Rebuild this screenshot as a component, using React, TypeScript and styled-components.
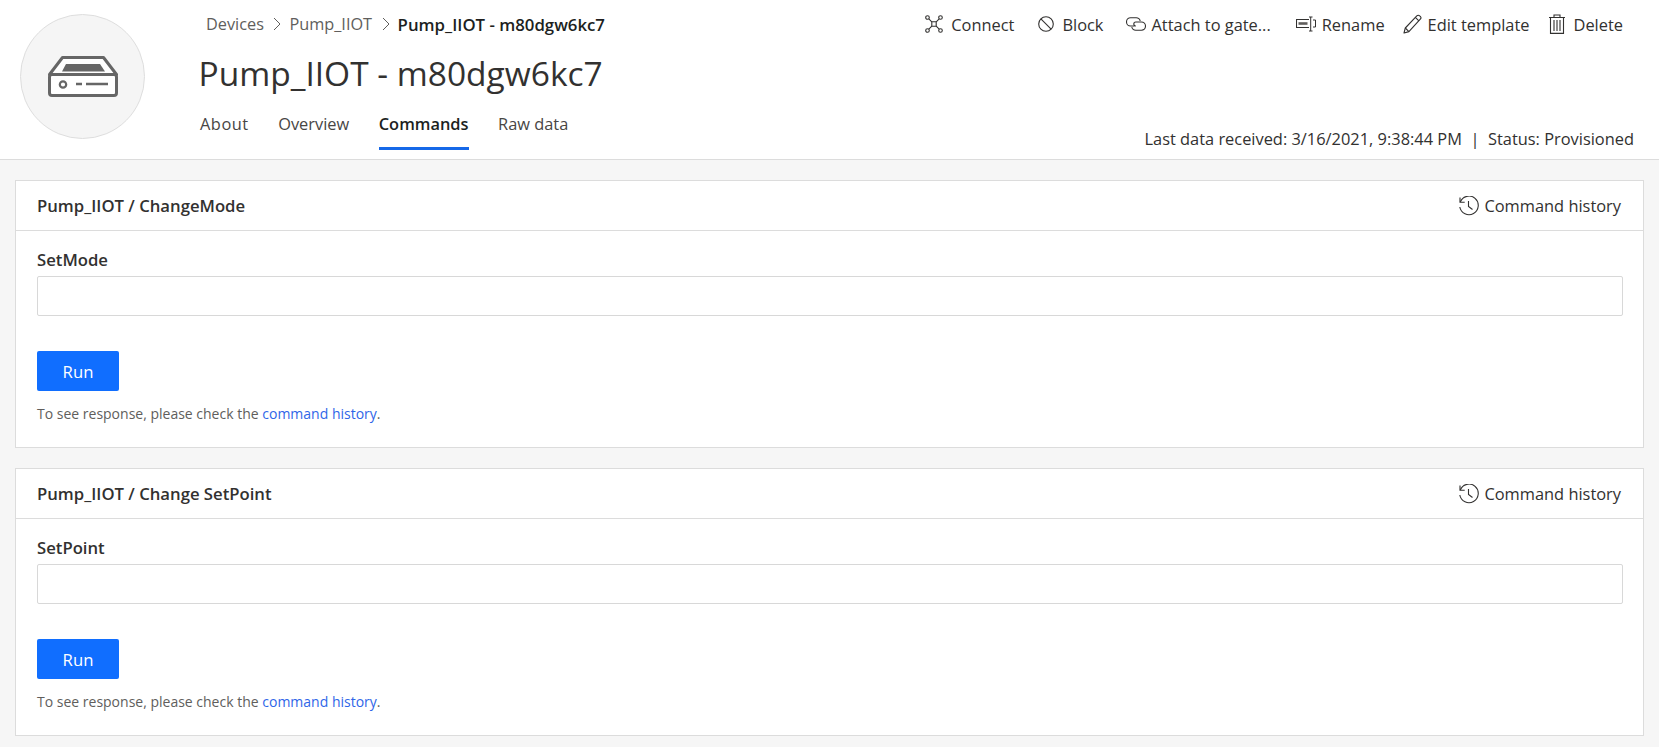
import React from "react";
import styled, { createGlobalStyle } from "styled-components";

const Global = createGlobalStyle`
  html, body { margin: 0; padding: 0; background: #f6f6f6; }
  body { font-family: "Open Sans", "Noto Sans", sans-serif; color: #323130; overflow: hidden; }
  * { box-sizing: border-box; }
`;

const Page = styled.div`
  min-height: 747px;
  background: #f6f6f6;
`;

const Header = styled.header`
  display: flex;
  height: 160px;
  background: #fff;
  border-bottom: 1px solid #dcdcdc;
`;

const Avatar = styled.div`
  flex: none;
  width: 125px;
  height: 125px;
  margin: 14px 54px 0 20px;
  border-radius: 50%;
  background: #f5f5f5;
  border: 1px solid #dedede;
  display: flex;
  align-items: center;
  justify-content: center;
`;

const Middle = styled.div`
  flex: none;
  display: flex;
  flex-direction: column;
  padding-top: 13px;
`;

const Crumbs = styled.nav`
  display: flex;
  align-items: center;
  height: 22px;
  padding-left: 7px;
  font-size: 16.3px;
`;

const CrumbLink = styled.span`
  color: #605e5c;
`;

const CrumbCurrent = styled.span`
  color: #201f1e;
  font-weight: 600;
  font-size: 16.8px;
`;

const CrumbSep = styled.svg`
  margin: 0 8px 0 9.5px;
`;

const Title = styled.h1`
  margin: 16px 0 0 -0.5px;
  font-size: 33.5px;
  line-height: 44px;
  font-weight: 400;
  color: #323130;
  white-space: nowrap;
`;

const Tabs = styled.div`
  display: flex;
  gap: 29.5px;
  margin-top: 13px;
  padding-left: 1px;
`;

const Tab = styled.div<{ $active?: boolean }>`
  height: 42px;
  line-height: 32px;
  font-size: 16.4px;
  font-weight: ${(p) => (p.$active ? 600 : 400)};
  color: ${(p) => (p.$active ? "#201f1e" : "#484644")};
  border-bottom: 3px solid ${(p) => (p.$active ? "#1668e8" : "transparent")};
  &:first-child {
    letter-spacing: 0.5px;
  }
`;

const Right = styled.div`
  flex: 1;
  display: flex;
  flex-direction: column;
  justify-content: space-between;
  align-items: flex-end;
  padding: 13px 25px 9px 0;
`;

const Actions = styled.div`
  display: flex;
  padding-right: 11px;
`;

const Action = styled.div<{ $gap: number }>`
  display: flex;
  align-items: center;
  height: 22px;
  margin-left: ${(p) => p.$gap}px;
  font-size: 16.4px;
  color: #323130;
  white-space: nowrap;
`;

const Glyph = styled.svg<{ $gap: number }>`
  flex: none;
  margin-right: ${(p) => p.$gap}px;
`;

const Status = styled.div`
  font-size: 16.4px;
  line-height: 22px;
  color: #323130;
  white-space: pre;
`;

const Main = styled.main`
  display: flex;
  flex-direction: column;
  gap: 20px;
  padding: 20px 15px 0;
`;

const Card = styled.section`
  background: #fff;
  border: 1px solid #dcdcdc;
`;

const CardHead = styled.div`
  display: flex;
  align-items: center;
  justify-content: space-between;
  height: 50px;
  padding: 0 22px 0 21px;
  border-bottom: 1px solid #dcdcdc;
`;

const CardTitle = styled.h2`
  margin: 0;
  font-size: 16.7px;
  font-weight: 600;
  color: #323130;
`;

const History = styled.div`
  display: flex;
  align-items: center;
  font-size: 16.4px;
  color: #323130;
`;

const CardBody = styled.div`
  padding: 18px 20px 23px 21px;
`;

const Label = styled.label`
  display: block;
  font-size: 16.7px;
  line-height: 22px;
  font-weight: 600;
  color: #323130;
`;

const Field = styled.input`
  display: block;
  width: 100%;
  height: 40px;
  margin-top: 5px;
  border: 1px solid #d8d8d8;
  border-radius: 2px;
  background: #fff;
  outline: none;
`;

const RunButton = styled.button`
  display: block;
  width: 82px;
  height: 40px;
  margin-top: 35px;
  border: none;
  border-radius: 2px;
  background: #106eff;
  color: #fff;
  font: 400 16.7px "Open Sans", sans-serif;
`;

const Help = styled.p`
  margin: 13px 0 0;
  font-size: 14px;
  line-height: 20px;
  color: #605e5c;
`;

const HelpLink = styled.a`
  color: #2f66e8;
`;

const Chevron = () => (
  <CrumbSep width="8" height="14" viewBox="0 0 8 14" fill="none" stroke="#605e5c" strokeWidth="1">
    <path d="M1 1l6 6-6 6" />
  </CrumbSep>
);

const DeviceIcon = () => (
  <svg width="70" height="41" viewBox="0 0 70 41" fill="none">
    <path d="M1.5 18.5 14.5 1.5h41l13 17z" fill="#fff" stroke="#666" strokeWidth="3" strokeLinejoin="round" />
    <rect x="1.5" y="18.5" width="67" height="21" rx="2.5" fill="#fff" stroke="#666" strokeWidth="3" />
    <path d="M14 15.5 18 8h34l5 7.5z" fill="#666" />
    <circle cx="15" cy="28.5" r="3.2" stroke="#666" strokeWidth="2.2" />
    <path d="M28 28h6M38 28h22" stroke="#666" strokeWidth="2.4" />
  </svg>
);

const stroke = { fill: "none", stroke: "#323130", strokeWidth: 1.1 };

const ConnectIcon = () => (
  <Glyph $gap={8} width="18" height="18" viewBox="0 0 18 18" {...stroke}>
    <circle cx="2.5" cy="2.5" r="1.8" />
    <circle cx="15.5" cy="2.5" r="1.8" />
    <circle cx="2.5" cy="15.5" r="1.8" />
    <circle cx="15.5" cy="15.5" r="1.8" />
    <path d="M3.8 3.8 6.8 6.8M14.2 3.8l-3 3M3.8 14.2l3-3M14.2 14.2l-3-3" />
    <path d="M6.8 6.8h4.4v4.4H6.8z" />
  </Glyph>
);

const BlockIcon = () => (
  <Glyph $gap={8} width="16" height="16" viewBox="0 0 16 16" {...stroke}>
    <circle cx="8" cy="8" r="7.3" />
    <path d="M2.9 2.9l10.2 10.2" />
  </Glyph>
);

const AttachIcon = () => (
  <Glyph $gap={5} width="20" height="14" viewBox="0 0 20 14" {...stroke}>
    <path d="M8.2 9H4.6a4.1 4.1 0 0 1 0-8.2h5.6a4.1 4.1 0 0 1 4 3.2" />
    <path d="M5.8 10a4.1 4.1 0 0 0 4 3.2h5.6a4.1 4.1 0 0 0 0-8.2h-5.6a2 2 0 0 0 0 4" />
  </Glyph>
);

const RenameIcon = () => (
  <Glyph $gap={6} width="20" height="16" viewBox="0 0 20 16" fill="none" stroke="#323130">
    <path d="M13 3.5H.5v8H13" strokeWidth="1.1" />
    <path d="M2.5 7.5h9" strokeWidth="2.6" stroke="#605e5c" />
    <path d="M13 1h3.5M13 15h3.5M14.7 1v14M17 4h2.5v7H17" strokeWidth="1" />
  </Glyph>
);

const PencilIcon = () => (
  <Glyph $gap={6} width="19" height="20" viewBox="0 0 19 20" {...stroke}>
    <path d="M1 19l1.3-5L13.8 1.8a2 2 0 0 1 2.9 0l.6.6a2 2 0 0 1 0 2.8L5.9 17.6z" strokeLinejoin="round" />
    <path d="M12.3 3.4l3.6 3.4M2.3 14l3.6 3.6" />
  </Glyph>
);

const TrashIcon = () => (
  <Glyph $gap={9} width="16" height="20" viewBox="0 0 16 20" {...stroke}>
    <path d="M0 3.5h16M5 3.5V1h6v2.5M1.5 3.5v15.9h13V3.5" />
    <path d="M5 6v11M8 6v11M11 6v11" />
  </Glyph>
);

const HistoryIcon = () => (
  <Glyph $gap={5} width="20" height="20" viewBox="0 0 20 20" {...stroke}>
    <path d="M1 1.5v4.7h4.7" />
    <path d="M1.3 6a9.3 9.3 0 1 1-.5 5" />
    <path d="M9.5 5v5.5l4 3" />
  </Glyph>
);

const actions = [
  { label: "Connect", gap: 0, icon: <ConnectIcon /> },
  { label: "Block", gap: 24, icon: <BlockIcon /> },
  { label: "Attach to gate...", gap: 23, icon: <AttachIcon /> },
  { label: "Rename", gap: 25, icon: <RenameIcon /> },
  { label: "Edit template", gap: 18, icon: <PencilIcon /> },
  { label: "Delete", gap: 19, icon: <TrashIcon /> },
];

const tabs = ["About", "Overview", "Commands", "Raw data"];

const commands = [
  { title: "Pump_IIOT / ChangeMode", field: "SetMode" },
  { title: "Pump_IIOT / Change SetPoint", field: "SetPoint" },
];

export default function App() {
  return (
    <Page>
      <Global />
      <Header>
        <Avatar>
          <DeviceIcon />
        </Avatar>
        <Middle>
          <Crumbs>
            <CrumbLink>Devices</CrumbLink>
            <Chevron />
            <CrumbLink>Pump_IIOT</CrumbLink>
            <Chevron />
            <CrumbCurrent>Pump_IIOT - m80dgw6kc7</CrumbCurrent>
          </Crumbs>
          <Title>Pump_IIOT - m80dgw6kc7</Title>
          <Tabs>
            {tabs.map((t) => (
              <Tab key={t} $active={t === "Commands"}>
                {t}
              </Tab>
            ))}
          </Tabs>
        </Middle>
        <Right>
          <Actions>
            {actions.map((a) => (
              <Action key={a.label} $gap={a.gap}>
                {a.icon}
                {a.label}
              </Action>
            ))}
          </Actions>
          <Status>Last data received: 3/16/2021, 9:38:44 PM  |  Status: Provisioned</Status>
        </Right>
      </Header>
      <Main>
        {commands.map((c) => (
          <Card key={c.field}>
            <CardHead>
              <CardTitle>{c.title}</CardTitle>
              <History>
                <HistoryIcon />
                Command history
              </History>
            </CardHead>
            <CardBody>
              <Label>{c.field}</Label>
              <Field aria-label={c.field} />
              <RunButton>Run</RunButton>
              <Help>
                To see response, please check the <HelpLink>command history</HelpLink>.
              </Help>
            </CardBody>
          </Card>
        ))}
      </Main>
    </Page>
  );
}
